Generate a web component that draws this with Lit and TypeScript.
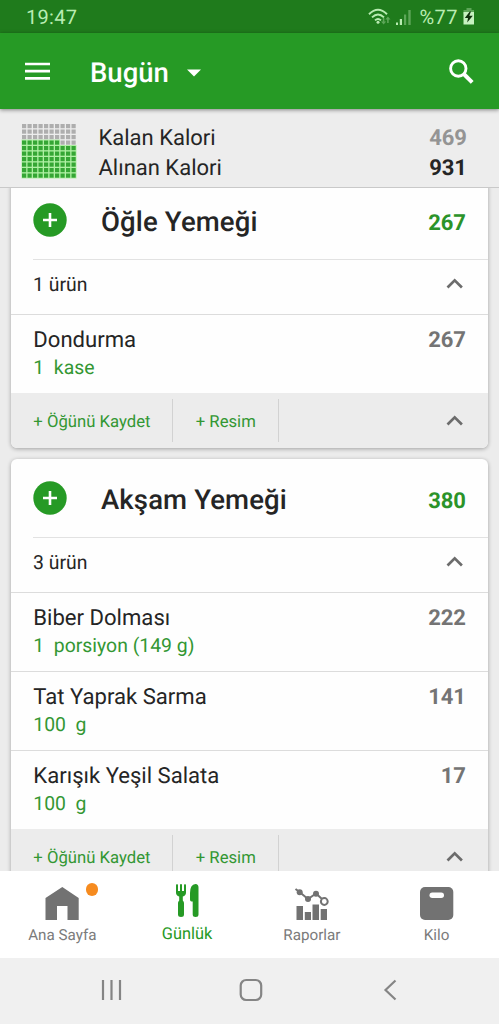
import { LitElement, html, css, svg } from "lit";
import { customElement, property } from "lit/decorators.js";

interface FoodItem {
  name: string;
  amount: string;
  calories: number;
}

interface Meal {
  title: string;
  count: string;
  total: number;
  items: FoodItem[];
}

const MEALS: Meal[] = [
  {
    title: "Öğle Yemeği",
    count: "1 ürün",
    total: 267,
    items: [{ name: "Dondurma", amount: "1  kase", calories: 267 }],
  },
  {
    title: "Akşam Yemeği",
    count: "3 ürün",
    total: 380,
    items: [
      { name: "Biber Dolması", amount: "1  porsiyon (149 g)", calories: 222 },
      { name: "Tat Yaprak Sarma", amount: "100  g", calories: 141 },
      { name: "Karışık Yeşil Salata", amount: "100  g", calories: 17 },
    ],
  },
];

const chevronUp = html`<svg width="18" height="12" viewBox="0 0 18 12">
  <path d="M1.5 9.500 L8.700 2.300 L15.900 9.500" fill="none" stroke="#6c6c6c" stroke-width="2.700" />
</svg>`;

@customElement("status-bar")
class StatusBar extends LitElement {
  static styles = css`
    :host {
      display: flex;
      align-items: center;
      height: 33px;
      box-sizing: border-box;
      padding: 0 24px 0 26px;
      background: #1f7b1c;
      color: #b9ecb2;
      font-size: 20px;
    }
    .time { flex: 1; letter-spacing: 0.3px; }
    .level { margin: 0 5px 0 8px; letter-spacing: 0.45px; }
    svg { display: block; }
  `;
  render() {
    return html`
      <span class="time">19:47</span>
      <svg width="44" height="20" viewBox="0 0 44 20">
        <g fill="none" stroke="#b9ecb2" stroke-width="1.9">
          <path d="M1 7.2 Q10 -1.6 19 7.2" />
          <path d="M4 10.4 Q10 4.6 16 10.4" />
          <path d="M7 13.4 Q10 10.7 13 13.4" />
        </g>
        <circle cx="10" cy="15.2" r="1.5" fill="#b9ecb2" />
        <g fill="#5da658">
          <path d="M14.8 11 h1.6 v3.4 h1.8 l-2.6 3 l-2.6 -3 h1.8z" />
          <path d="M20.3 17 h1.6 v-3.6 h1.8 l-2.6 -3 l-2.6 3 h1.8z" transform="translate(-1.2 -1)" />
        </g>
        <rect x="28" y="15.5" width="2" height="2.5" fill="#b9ecb2" />
        <rect x="31.8" y="12" width="2.2" height="6" fill="#b9ecb2" />
        <rect x="36" y="7.5" width="2.2" height="10.5" fill="#5da658" />
        <rect x="40.3" y="3" width="2.4" height="15" fill="#5da658" />
      </svg>
      <span class="level">%77</span>
      <svg width="12" height="17" viewBox="0 0 12 17">
        <path d="M3.5 0 h5 v2 h2.5 v4 h-10.500 v-4 h3z" fill="#5da658" />
        <rect x="0.500" y="4" width="10.500" height="12.500" fill="#c6f2c0" />
        <path d="M6.800 3.600 L1.800 10 H5 L4.200 14.500 L9.800 7.800 H6.300 L8 3.600z" fill="#10300e" />
      </svg>
    `;
  }
}

@customElement("app-bar")
class AppBar extends LitElement {
  static styles = css`
    :host {
      display: flex;
      align-items: center;
      height: 76px;
      box-sizing: border-box;
      padding: 0 25px;
      background: #269a25;
      color: #fff;
      position: relative;
      z-index: 1;
      box-shadow: 0 1px 4px rgba(0, 0, 0, 0.45);
    }
    .title {
      margin-left: 40px;
      padding-top: 2px;
      font-size: 27.5px;
      font-weight: 500;
    }
    .caret { margin: 4px 0 0 18px; }
    .search { margin-left: auto; }
    svg { display: block; }
  `;
  render() {
    return html`
      <svg width="25" height="18" viewBox="0 0 25 18">
        <path d="M0 2H25M0 9.200H25M0 16.400H25" stroke="#fff" stroke-width="2.700" />
      </svg>
      <span class="title">Bugün</span>
      <svg class="caret" width="14" height="8" viewBox="0 0 14 8"><path d="M0 0.500H14L7 7.500z" fill="#fff" /></svg>
      <svg class="search" width="25" height="25" viewBox="0 0 25 25">
        <circle cx="9.300" cy="9.500" r="7.700" fill="none" stroke="#fff" stroke-width="2.900" />
        <path d="M14.800 15L23.200 23.300" stroke="#fff" stroke-width="4" />
      </svg>
    `;
  }
}

@customElement("calorie-summary")
class CalorieSummary extends LitElement {
  static styles = css`
    :host {
      display: flex;
      height: 79px;
      box-sizing: border-box;
      padding: 14px 32px 0 21px;
      background: #ededed;
      border-bottom: 1px solid #c9c9c9;
      font-size: 22px;
      line-height: 30px;
      color: #252525;
    }
    .grid { display: block; }
    .lines { flex: 1; margin-left: 21.5px; padding-top: 1px; }
    .line { display: flex; justify-content: space-between; }
    .value { font-weight: 700; }
    .left { color: #949494; }
  `;
  render() {
    const cells = Array.from({ length: 100 }, (_, i) => {
      const row = Math.floor(i / 10);
      const col = i % 10;
      const filled = row > 3 || (row === 3 && col < 7);
      const x = 1 + col * 5.5;
      const y = 1 + row * 5.5;
      return svg`<rect x=${x} y=${y} width="4.2" height="4.2" fill=${filled ? "#35a634" : "#aeaeae"} />`;
    });
    return html`
      <svg class="grid" width="56" height="56" viewBox="0 0 56 56">
        <path d="M0.500 16.500H39V22H55.500V55.500H0.500z" fill="#b0f0a4" />
        ${cells}
      </svg>
      <div class="lines">
        <div class="line"><span>Kalan Kalori</span><span class="value left">469</span></div>
        <div class="line"><span>Alınan Kalori</span><span class="value">931</span></div>
      </div>
    `;
  }
}

@customElement("meal-card")
class MealCard extends LitElement {
  @property({ attribute: false }) meal!: Meal;

  static styles = css`
    :host {
      display: block;
      background: #fefefe;
      border-radius: 6px;
      overflow: hidden;
      box-shadow: 0 1px 4px rgba(0, 0, 0, 0.32);
      color: #252525;
    }
    svg { display: block; }
    .header { display: flex; align-items: center; height: 78px; padding: 0 22px; }
    .title {
      flex: 1;
      margin-left: 34px;
      padding-top: 3px;
      font-size: 27.5px;
      font-weight: 500;
      letter-spacing: 0.14px;
      white-space: nowrap;
    }
    .total { padding-top: 8px; font-size: 22px; font-weight: 700; line-height: 26px; color: #2b9329; }
    .count {
      display: flex;
      align-items: center;
      justify-content: space-between;
      height: 55px;
      box-sizing: border-box;
      margin-left: 22px;
      padding: 0 24px 6px 0;
      border-top: 1px solid #e2e2e2;
      font-size: 19.4px;
    }
    .count svg { margin-bottom: 1px; }
    .item {
      display: flex;
      justify-content: space-between;
      height: 79px;
      box-sizing: border-box;
      padding: 11px 22px 0 22.3px;
      border-top: 1px solid #dcdcdc;
      line-height: 28px;
    }
    .name { font-size: 22.1px; }
    .amount { font-size: 19.4px; color: #339733; white-space: pre; }
    .calories { padding-top: 1px; font-size: 22px; font-weight: 700; color: #747474; }
    .footer {
      display: flex;
      align-items: center;
      height: 55px;
      background: #ececec;
      font-size: 16.7px;
      color: #339733;
    }
    .action {
      display: flex;
      align-items: center;
      height: 43px;
      box-sizing: border-box;
      padding: 3px 22px 0 22.3px;
      border-right: 1px solid #d2d2d2;
      white-space: nowrap;
    }
    .collapse { margin: 0 24px 0 auto; }
  `;
  render() {
    const { title, count, total, items } = this.meal;
    return html`
      <div class="header">
        <svg width="34" height="34" viewBox="0 0 34 34">
          <circle cx="17" cy="17" r="16.700" fill="#269a25" />
          <path d="M10 17H24M17 10V24" stroke="#fff" stroke-width="2.600" />
        </svg>
        <span class="title">${title}</span>
        <span class="total">${total}</span>
      </div>
      <div class="count"><span>${count}</span>${chevronUp}</div>
      ${items.map(
        (item) => html`<div class="item">
          <div>
            <div class="name">${item.name}</div>
            <div class="amount">${item.amount}</div>
          </div>
          <div class="calories">${item.calories}</div>
        </div>`
      )}
      <div class="footer">
        <span class="action">+ Öğünü Kaydet</span>
        <span class="action">+ Resim</span>
        <span class="collapse">${chevronUp}</span>
      </div>
    `;
  }
}

@customElement("tab-bar")
class TabBar extends LitElement {
  static styles = css`
    :host {
      display: grid;
      grid-template-columns: repeat(4, 1fr);
      height: 87px;
      background: #fff;
      color: #7b7b7b;
      font-size: 15.2px;
    }
    .tab { display: flex; flex-direction: column; align-items: center; padding-top: 12px; line-height: 20px; }
    .icon { position: relative; width: 36px; height: 42px; }
    .icon svg { display: block; }
    .active { color: #269a25; font-size: 16.4px; }
    .dot {
      position: absolute;
      left: 41.500px;
      top: 0;
      width: 12.500px;
      height: 12.500px;
      border-radius: 50%;
      background: #f68b1f;
    }
  `;
  render() {
    return html`
      <div class="tab">
        <div class="icon">
          <svg width="36" height="40" viewBox="0 0 36 40">
            <path d="M18.300 4L34.700 15V37H23.500V23H13V37H1.500V15z" fill="#727272" />
          </svg>
          <span class="dot"></span>
        </div>
        <span>Ana Sayfa</span>
      </div>
      <div class="tab active">
        <div class="icon">
          <svg width="36" height="40" viewBox="0 0 36 40" fill="#269a25">
            <path d="M7 2.500Q7 1 8 1T9 2.500V8H11V2Q11 1 12 1T13 2V8H15V2.500Q15 1 16 1T17 2.500V9.500Q17 12.500 13.800 13.500V17.500Q15 18.500 15 20V31.500Q15 34 12 34T9 31.500V20Q9 18.500 10.200 17.500V13.500Q7 12.500 7 9.500z" />
            <path d="M26.500 1Q29.500 1.300 29.500 4.500V31.500Q29.500 34 26.600 34T23.700 31.500V18.500H22.500Q21 18.500 21 16.500V10Q21 1.500 26.500 1z" />
          </svg>
        </div>
        <span>Günlük</span>
      </div>
      <div class="tab">
        <div class="icon">
          <svg width="36" height="40" viewBox="0 0 36 40" fill="#727272">
            <path d="M2.500 23H9V37H2.500zM10.800 29H17V37H10.800zM18.500 21.500H25V37H18.500zM26.700 26H33V37H26.700z" />
            <path d="M1.500 6L5.500 9L14 16L22 10.500L28 16" fill="none" stroke="#727272" stroke-width="2" />
            <circle cx="5.700" cy="9.300" r="3" />
            <circle cx="14" cy="16" r="3" />
            <circle cx="22" cy="10.800" r="3" />
            <circle cx="30.300" cy="18.500" r="3.400" fill="#fff" stroke="#727272" stroke-width="2" />
          </svg>
        </div>
        <span>Raporlar</span>
      </div>
      <div class="tab">
        <div class="icon">
          <svg width="36" height="40" viewBox="0 0 36 40">
            <rect x="1" y="4" width="33.300" height="33" rx="5" fill="#727272" />
            <rect x="10.500" y="9.500" width="14.500" height="5.500" rx="2.750" fill="#fff" />
          </svg>
        </div>
        <span>Kilo</span>
      </div>
    `;
  }
}

@customElement("system-nav")
class SystemNav extends LitElement {
  static styles = css`
    :host {
      display: flex;
      justify-content: space-between;
      align-items: center;
      height: 66px;
      box-sizing: border-box;
      padding: 0 102px 2px 100px;
      background: #f0f0f0;
    }
    svg { display: block; }
  `;
  render() {
    return html`
      <svg width="22" height="22" viewBox="0 0 22 22">
        <path d="M3 1V21M11.500 1V21M20 1V21" stroke="#858585" stroke-width="2.200" />
      </svg>
      <svg width="28" height="24" viewBox="0 0 28 24">
        <rect x="1.700" y="2" width="20.500" height="20" rx="5.500" fill="none" stroke="#858585" stroke-width="2.200" />
      </svg>
      <svg width="14" height="22" viewBox="0 0 14 22">
        <path d="M12.500 1.500L2.500 11L12.500 20.500" fill="none" stroke="#858585" stroke-width="2.200" />
      </svg>
    `;
  }
}

@customElement("app-root")
class AppRoot extends LitElement {
  static styles = css`
    :host {
      display: flex;
      flex-direction: column;
      width: 499px;
      height: 1024px;
      overflow: hidden;
      background: #ececec;
      font-family: Roboto, "Noto Sans", sans-serif;
      text-rendering: geometricPrecision;
    }
    .scroll { flex: 1; min-height: 0; overflow: hidden; }
    .cards { display: flex; flex-direction: column; gap: 11px; margin-top: -7px; padding: 0 11px; }
  `;
  render() {
    return html`
      <status-bar></status-bar>
      <app-bar></app-bar>
      <calorie-summary></calorie-summary>
      <div class="scroll">
        <div class="cards">${MEALS.map((meal) => html`<meal-card .meal=${meal}></meal-card>`)}</div>
      </div>
      <tab-bar></tab-bar>
      <system-nav></system-nav>
    `;
  }
}
